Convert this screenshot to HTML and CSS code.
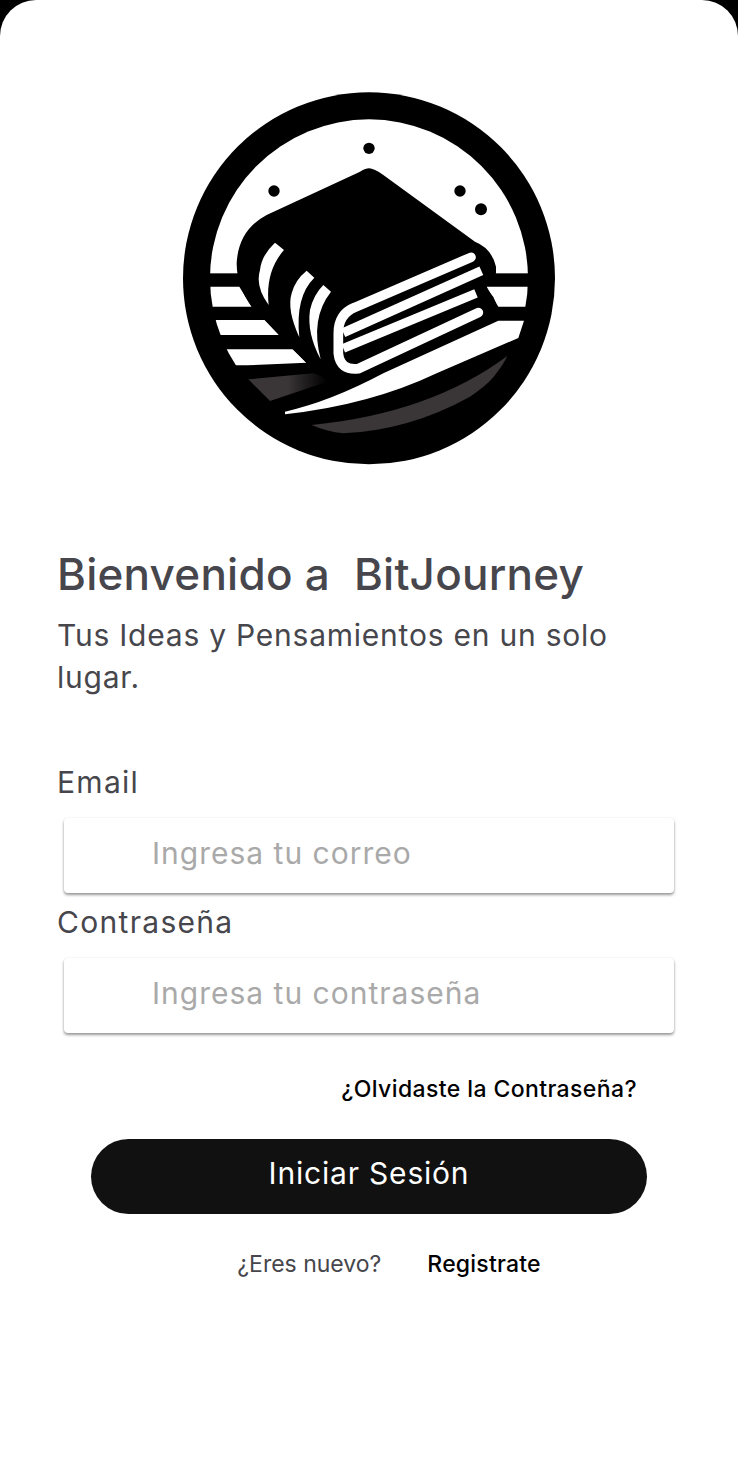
FILE: index.html
```html
<!DOCTYPE html>
<html lang="es">
<head>
  <meta charset="UTF-8" />
  <meta name="viewport" content="width=device-width, initial-scale=1.0" />
  <title>BitJourney</title>
  <link rel="stylesheet" href="styles.css">
</head>
<body>
  <div class="card">
    <svg class="logo" viewBox="-3 0 1200 1200" aria-label="BitJourney">
      <defs>
        <clipPath id="inner"><circle cx="597" cy="595" r="477" /></clipPath>
        <linearGradient id="fade" x1="0" x2="1" y1="0" y2="0">
          <stop offset="0.5" stop-color="#3a3537" />
          <stop offset="1" stop-color="#000" />
        </linearGradient>
      </defs>
      <circle cx="597" cy="595" r="558" fill="#000" />
      <g clip-path="url(#inner)">
        <rect x="100" y="100" width="1000" height="480" fill="#fff" />
        <path fill="#fff" d="M100,620H208L245,680H100Z M100,720H285L327,765H100Z M100,808H368L410,848L230,856H100Z M950,620H1100V680H985Z" />
        <path fill="url(#fade)" d="M235,898L430,880Q455,885 472,905L300,963Z" />
        <path fill="#3a3537" d="M425,1035Q780,1000 1012,828Q990,890 900,950Q720,1050 520,1060Q470,1055 425,1035Z" />
      </g>
      <circle cx="597" cy="205" r="17" fill="#000" />
      <circle cx="312" cy="333" r="17" fill="#000" />
      <circle cx="870" cy="333" r="17" fill="#000" />
      <circle cx="933" cy="388" r="18" fill="#000" />
      <path fill="#000" d="M597,265Q612,265 640,285L915,485Q965,505 978,560V580L945,625Q980,650 978,685L960,725L570,900H470L410,850L327,765L245,680Q200,620 200,550Q205,450 290,405L570,275Q588,265 597,265Z" />
      <path fill="#fff" d="M345,995Q480,965 640,880L985,722H1062L1045,774L800,880Q600,975 345,1003Z" />
      <g fill="#fff">
        <path d="M315,488L342,510Q285,575 296,675Q255,620 270,570Q275,525 315,488Z" />
        <path d="M410,572L433,593Q375,650 388,772Q350,690 365,640Q375,600 410,572Z" />
        <path d="M460,615L483,635Q420,715 452,838Q410,760 420,690Q430,645 460,615Z" />
      </g>
      <g fill="none" stroke="#fff">
        <path stroke-width="29" stroke-linecap="round" d="M903,532L555,682Q505,702 505,760V820Q510,872 565,866L925,698" />
        <path stroke-width="28" d="M520,758L934,572" />
        <path stroke-width="27" d="M520,805L918,640" />
      </g>
    </svg>

    <h1 class="title">Bienvenido a&nbsp; BitJourney</h1>
    <p class="subtitle">Tus Ideas y Pensamientos en un solo lugar.</p>

    <form class="login">
      <label class="field-label" for="email">Email</label>
      <input class="field" type="email" id="email" placeholder="Ingresa tu correo" />
      <label class="field-label" for="password">Contraseña</label>
      <input class="field" type="password" id="password" placeholder="Ingresa tu contraseña" />
      <a class="forgot" href="#">¿Olvidaste la Contraseña?</a>
      <button class="submit" type="button">Iniciar Sesión</button>
      <div class="signup">
        <span class="signup-text">¿Eres nuevo?</span>
        <a class="signup-link" href="#">Registrate</a>
      </div>
    </form>
  </div>
</body>
</html>
```

FILE: styles.css
```css
* {
  box-sizing: border-box;
}
html, body {
  margin: 0;
  height: 100%;
}
body {
  background-color: #000;
  font-family: Inter, "Noto Sans", sans-serif;
  color: #46464c;
}
.card {
  height: 1458px;
  background: #fff;
  border-radius: 36px 36px 0 0;
  padding: 80px 0 0;
}
.logo {
  display: block;
  width: 400px;
  height: 400px;
  margin: 0 auto;
}
.title {
  margin: 64px 57px 0;
  font-size: 44px;
  line-height: 60px;
  font-weight: 500;
  letter-spacing: 0.25px;
  white-space: nowrap;
}
.subtitle {
  margin: 10px 57px 0;
  font-size: 30px;
  line-height: 42px;
  letter-spacing: 0.77px;
  width: 600px;
}
.login {
  display: flex;
  flex-direction: column;
  margin-top: 62px;
}
.field-label {
  margin-left: 57px;
  font-size: 30px;
  line-height: 44px;
  letter-spacing: 1.3px;
}
.field {
  width: 610px;
  height: 75px;
  margin: 14px 0 7px 64px;
  padding: 0 0 6px 88px;
  border: none;
  border-radius: 4px;
  background: #fff;
  box-shadow: 0 0 2px rgba(0,0,0,0.08), 0 2px 3px rgba(0,0,0,0.4);
  font-family: inherit;
  font-size: 30px;
  letter-spacing: 1px;
  color: #46464c;
}
.field::placeholder {
  color: #a9a9a9;
  opacity: 1;
}
.forgot {
  align-self: flex-end;
  margin: 31px 101px 0 0;
  font-size: 23px;
  line-height: 36px;
  font-weight: 500;
  letter-spacing: 0.4px;
  color: #000;
  text-decoration: none;
}
.submit {
  width: 556px;
  height: 75px;
  margin: 32px 0 0 91px;
  border: none;
  border-radius: 38px;
  background-color: #111;
  color: #fff;
  font-family: inherit;
  font-size: 30px;
  letter-spacing: 0.8px;
  padding-bottom: 8px;
}
.signup {
  display: flex;
  justify-content: center;
  gap: 46px;
  margin-top: 32px;
  padding-left: 40px;
  font-size: 23px;
  line-height: 36px;
}
.signup-link {
  color: #000;
  font-weight: 500;
  letter-spacing: 0.2px;
  text-decoration: none;
}
```
